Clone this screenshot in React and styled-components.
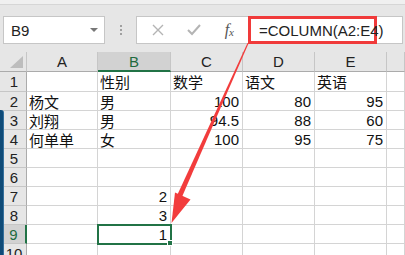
import React from 'react';
import styled, { createGlobalStyle } from 'styled-components';

const GlobalStyle = createGlobalStyle`
  html, body {
    margin: 0;
    padding: 0;
    background: #e6e6e6;
  }
  * {
    box-sizing: border-box;
  }
`;

const FONT = `"Liberation Sans", "Noto Sans CJK SC", sans-serif`;

const columns = ['A', 'B', 'C', 'D', 'E', ''];

const rows = [
  ['', '性别', '数学', '语文', '英语', ''],
  ['杨文', '男', 100, 80, 95, ''],
  ['刘翔', '男', 94.5, 88, 60, ''],
  ['何单单', '女', 100, 95, 75, ''],
  ['', '', '', '', '', ''],
  ['', '', '', '', '', ''],
  ['', 2, '', '', '', ''],
  ['', 3, '', '', '', ''],
  ['', 1, '', '', '', ''],
  ['', '', '', '', '', ''],
];

const SELECTED_COL = 1;
const SELECTED_ROW = 9;

const App = () => {
  return (
    <>
      <GlobalStyle />
      <Window>
        <TopStrip />
        <FormulaBar>
          <NameBox>
            <span>B9</span>
            <DropArrow />
          </NameBox>
          <Grip>
            <i />
            <i />
            <i />
          </Grip>
          <FxButtons>
            <FxIcon>
              <svg width="12" height="12" viewBox="0 0 12 12">
                <path d="M1 1 L11 11 M11 1 L1 11" stroke="#b4b4b4" strokeWidth="1.4" />
              </svg>
            </FxIcon>
            <FxIcon>
              <svg width="14" height="12" viewBox="0 0 14 12">
                <path d="M1 6 L5 10 L13 1" stroke="#b4b4b4" strokeWidth="2" fill="none" />
              </svg>
            </FxIcon>
            <FxLabel>
              f<sub>x</sub>
            </FxLabel>
          </FxButtons>
          <FormulaInput>
            <Highlight>=COLUMN(A2:E4)</Highlight>
          </FormulaInput>
        </FormulaBar>

        <Sheet>
          <Corner>
            <svg width="13" height="12" viewBox="0 0 13 12">
              <polygon points="13,0 13,12 0,12" fill="#bdbdbd" />
            </svg>
          </Corner>
          {columns.map((c, i) => (
            <ColHeader key={c + i} $active={i === SELECTED_COL}>
              {c}
            </ColHeader>
          ))}
          {rows.map((row, r) => (
            <React.Fragment key={r}>
              <RowHeader $active={r + 1 === SELECTED_ROW}>{r + 1}</RowHeader>
              {row.map((v, c) => (
                <Cell
                  key={c}
                  $num={typeof v === 'number'}
                  $selected={r + 1 === SELECTED_ROW && c === SELECTED_COL}
                >
                  {v}
                  {r + 1 === SELECTED_ROW && c === SELECTED_COL && <FillHandle />}
                </Cell>
              ))}
            </React.Fragment>
          ))}
        </Sheet>

        <SideBar />
        <Arrow width="405" height="255" viewBox="0 0 405 255">
          <polygon points="247.5,43 248.5,43.5 181.5,198 176.8,196" fill="#f23c3c" />
          <polygon points="171.5,223 175,192.5 190.5,199.5" fill="#f23c3c" />
        </Arrow>
      </Window>
    </>
  );
};

export default App;

const Window = styled.div`
  position: relative;
  width: 405px;
  height: 255px;
  overflow: hidden;
  background: #e6e6e6;
  font-family: ${FONT};
`;

const TopStrip = styled.div`
  height: 5px;
  border-bottom: 1px solid #d6d6d6;
  background: #f0f0f0;
`;

const FormulaBar = styled.div`
  display: flex;
  align-items: flex-start;
  height: 47px;
  padding: 11px 2px 0 3px;
`;

const NameBox = styled.div`
  display: flex;
  align-items: center;
  justify-content: space-between;
  width: 102px;
  height: 28px;
  padding: 0 6px 0 7px;
  background: #fff;
  border: 1px solid #c6c6c6;
  font-size: 15px;
  color: #222;
`;

const DropArrow = styled.div`
  width: 0;
  height: 0;
  border-left: 4px solid transparent;
  border-right: 4px solid transparent;
  border-top: 4px solid #777;
`;

const Grip = styled.div`
  display: flex;
  flex-direction: column;
  gap: 2px;
  width: 31px;
  height: 28px;
  align-items: center;
  justify-content: center;

  i {
    width: 2px;
    height: 2px;
    background: #a0a0a0;
  }
`;

const FxButtons = styled.div`
  display: flex;
  align-items: center;
  justify-content: space-between;
  width: 112px;
  height: 28px;
  padding: 0 14px 0 15px;
  background: #fff;
  border: 1px solid #c6c6c6;
  border-right: none;
`;

const FxIcon = styled.div`
  display: flex;
  align-items: center;
`;

const FxLabel = styled.div`
  font-family: "Liberation Serif", serif;
  font-style: italic;
  font-size: 16px;
  color: #555;

  sub {
    font-size: 11px;
    vertical-align: -1px;
  }
`;

const FormulaInput = styled.div`
  flex: 1;
  height: 28px;
  display: flex;
  background: #fff;
  border: 1px solid #c6c6c6;
  border-left: none;
`;

const Highlight = styled.div`
  display: flex;
  align-items: center;
  width: 129px;
  height: 28px;
  margin-top: -1px;
  margin-bottom: -1px;
  padding-left: 8px;
  border: 3px solid #f03a3a;
  font-size: 15px;
  color: #222;
  white-space: nowrap;
`;

const Sheet = styled.div`
  display: grid;
  grid-template-columns: 27px 71px 73px 72px 72px 72px 1fr;
  grid-template-rows: 20px 20px repeat(9, 19px);
  background: #fff;
  font-size: 15px;
  color: #111;
`;

const Corner = styled.div`
  display: flex;
  align-items: flex-end;
  justify-content: flex-end;
  padding: 0 3px 3px 0;
  background: #e6e6e6;
  border-right: 1px solid #c6c6c6;
  border-bottom: 1px solid #ababab;
`;

const ColHeader = styled.div`
  display: flex;
  align-items: center;
  justify-content: center;
  background: ${(p) => (p.$active ? '#d2d2d2' : '#e6e6e6')};
  color: ${(p) => (p.$active ? '#1f6b3f' : '#222')};
  border-right: 1px solid #c6c6c6;
  border-bottom: ${(p) => (p.$active ? '2px solid #217346' : '1px solid #ababab')};
`;

const RowHeader = styled.div`
  display: flex;
  align-items: center;
  justify-content: center;
  padding-left: 2px;
  background: ${(p) => (p.$active ? '#d2d2d2' : '#e6e6e6')};
  color: ${(p) => (p.$active ? '#1f6b3f' : '#222')};
  border-right: ${(p) => (p.$active ? '2px solid #217346' : '1px solid #ababab')};
  border-bottom: 1px solid #c6c6c6;
`;

const Cell = styled.div`
  position: relative;
  display: flex;
  align-items: center;
  justify-content: ${(p) => (p.$num ? 'flex-end' : 'flex-start')};
  padding: 0 3px 0 2px;
  border-right: 1px solid #d4d4d4;
  border-bottom: 1px solid #d4d4d4;
  white-space: nowrap;
  ${(p) =>
    p.$selected &&
    `
    outline: 2px solid #217346;
    outline-offset: -1px;
    z-index: 1;
  `}
`;

const FillHandle = styled.div`
  position: absolute;
  right: -3px;
  bottom: -3px;
  width: 6px;
  height: 6px;
  background: #217346;
  border: 1px solid #fff;
`;

const SideBar = styled.div`
  position: absolute;
  left: 0;
  top: 110px;
  width: 4px;
  height: 150px;
  background: #0f4b78;
  border-top-right-radius: 3px;
  border-right: 1px solid #35709c;
`;

const Arrow = styled.svg`
  position: absolute;
  left: 0;
  top: 0;
  pointer-events: none;
  z-index: 5;
`;
